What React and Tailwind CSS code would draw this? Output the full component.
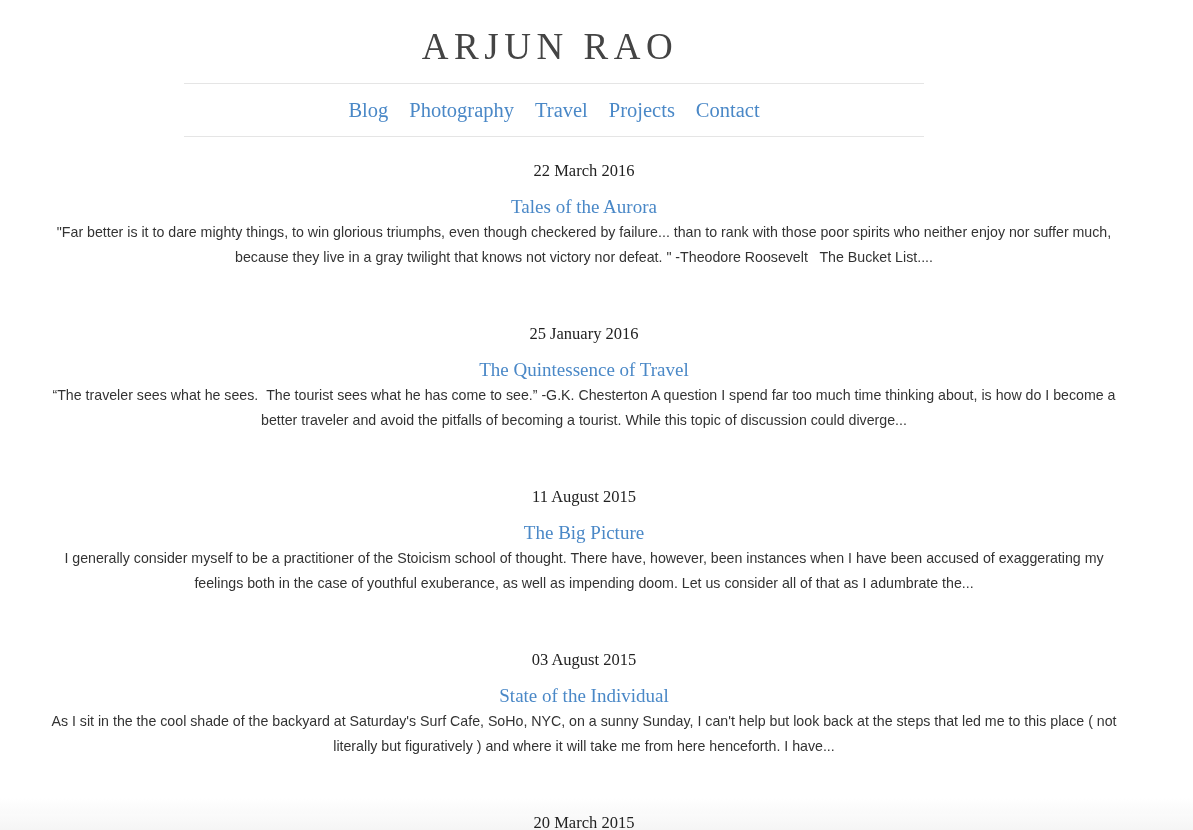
import React from 'react';

const serif = { fontFamily: '"Liberation Serif", "DejaVu Serif", serif' };

const posts = [
  {
    date: '22 March 2016',
    title: 'Tales of the Aurora',
    excerpt:
      '"Far better is it to dare mighty things, to win glorious triumphs, even though checkered by failure... than to rank with those poor spirits who neither enjoy nor suffer much, because they live in a gray twilight that knows not victory nor defeat. " -Theodore Roosevelt \u00a0 The Bucket List....',
  },
  {
    date: '25 January 2016',
    title: 'The Quintessence of Travel',
    excerpt:
      '\u201cThe traveler sees what he sees. \u00a0The tourist sees what he has come to see.\u201d -G.K. Chesterton A question I spend far too much time thinking about, is how do I become a better traveler and avoid the pitfalls of becoming a tourist. While this topic of discussion could diverge...',
  },
  {
    date: '11 August 2015',
    title: 'The Big Picture',
    excerpt:
      'I generally consider myself to be a practitioner of the Stoicism school of thought. There have, however, been instances when I have been accused of exaggerating my feelings both in the case of youthful exuberance, as well as impending doom. Let us consider all of that as I adumbrate the...',
  },
  {
    date: '03 August 2015',
    title: 'State of the Individual',
    excerpt:
      "As I sit in the the cool shade of the backyard at Saturday's Surf Cafe, SoHo, NYC, on a sunny Sunday, I can't help but look back at the steps that led me to this place ( not literally but figuratively ) and where it will take me from here henceforth. I have...",
  },
  {
    date: '20 March 2015',
    title: 'Notes from the Road',
    excerpt:
      'A few thoughts gathered along the way, written down before they slipped away into the noise of everyday life and the endless rush of the city...',
  },
];

const navLinks = ['Blog', 'Photography', 'Travel', 'Projects', 'Contact'];

const Header = () => (
  <header className="w-[740px] ml-[184px]">
    <h1
      style={serif}
      className="text-center text-[37px] leading-[48px] tracking-[0.15em] text-[#444] pt-[23px] pb-[12px] pr-[8px]"
    >
      ARJUN RAO
    </h1>
    <nav className="border-t border-b border-[#e5e5e5] h-[54px] flex items-center justify-center gap-[21px] pt-[1px]">
      {navLinks.map((l) => (
        <a key={l} href="#" style={serif} className="text-[20.5px] text-[#4a88c7]">
          {l}
        </a>
      ))}
    </nav>
  </header>
);

const Post = ({ post }) => (
  <article className="text-center mb-[52px]">
    <div style={serif} className="text-[16.5px] leading-[24px] text-[#222]">
      {post.date}
    </div>
    <h2 style={serif} className="mt-[12px] text-[19px] leading-[24px] text-[#4a88c7]">
      <a href="#">{post.title}</a>
    </h2>
    <p
      className="mt-[1px] text-[14.2px] leading-[25px] text-[#333]"
      style={{ fontFamily: '"Liberation Sans", Arial, sans-serif' }}
    >
      {post.excerpt}
    </p>
  </article>
);

export default function App() {
  return (
    <div className="min-h-screen">
      <div className="fixed bottom-0 left-0 right-0 h-[32px] pointer-events-none bg-gradient-to-b from-transparent to-[#f5f5f5]" />
      <div className="relative z-10">
        <Header />
        <main className="w-[1168px] px-[46px] pt-[22px]">
          {posts.map((p) => (
            <Post key={p.date} post={p} />
          ))}
        </main>
      </div>
    </div>
  );
}
